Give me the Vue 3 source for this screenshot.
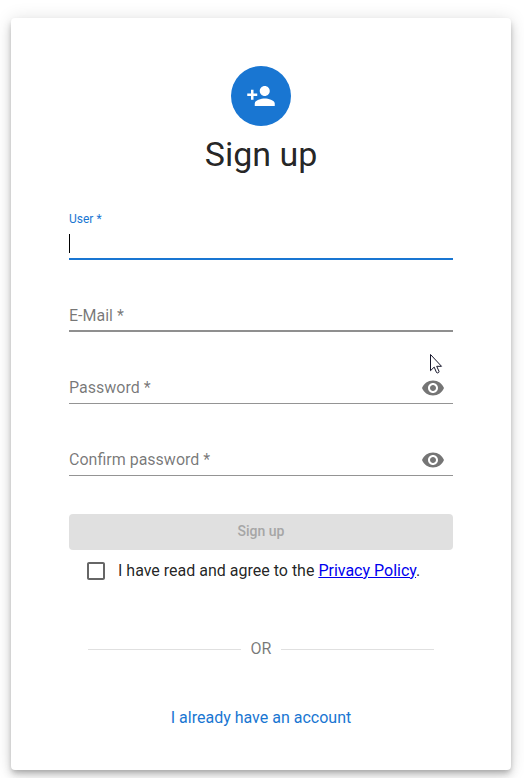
<script setup>
import { ref } from 'vue'

const fields = ref([
  { id: 'user', label: 'User', state: 'focused' },
  { id: 'email', label: 'E-Mail', state: 'hovered' },
  { id: 'password', label: 'Password', state: '', secret: true },
  { id: 'confirm', label: 'Confirm password', state: '', secret: true },
])
</script>

<template>
  <main class="page">
    <section class="card">
      <div class="avatar">
        <svg class="avatar-icon" viewBox="0 0 24 24">
          <path d="M15 12c2.21 0 4-1.79 4-4s-1.79-4-4-4-4 1.79-4 4 1.79 4 4 4zm-9-2V7H4v3H1v2h3v3h2v-3h3v-2H6zm9 4c-2.67 0-8 1.34-8 4v2h16v-2c0-2.66-5.33-4-8-4z" />
        </svg>
      </div>
      <h1 class="title">Sign up</h1>

      <form class="form" @submit.prevent>
        <div v-for="f in fields" :key="f.id" class="field" :class="f.state">
          <label class="label">{{ f.label }} *</label>
          <span v-if="f.state === 'focused'" class="caret"></span>
          <svg v-if="f.secret" class="eye" viewBox="0 0 24 24">
            <path d="M12 4.5C7 4.5 2.73 7.61 1 12c1.73 4.39 6 7.5 11 7.5s9.27-3.11 11-7.5c-1.73-4.39-6-7.5-11-7.5zM12 17c-2.76 0-5-2.24-5-5s2.24-5 5-5 5 2.24 5 5-2.24 5-5 5zm0-8c-1.66 0-3 1.34-3 3s1.34 3 3 3 3-1.34 3-3-1.34-3-3-3z" />
          </svg>
        </div>
        <button class="submit" disabled>Sign up</button>
      </form>

      <div class="agree">
        <svg class="checkbox" viewBox="0 0 24 24">
          <path d="M19 5v14H5V5h14m0-2H5c-1.1 0-2 .9-2 2v14c0 1.1.9 2 2 2h14c1.1 0 2-.9 2-2V5c0-1.1-.9-2-2-2z" />
        </svg>
        <span class="agree-text">I have read and agree to the <a class="policy" href="#">Privacy Policy</a>.</span>
      </div>

      <div class="divider"><span>OR</span></div>
      <a class="account">I already have an account</a>
    </section>

    <svg class="pointer" viewBox="0 0 13 20">
      <path d="M.5.5v16.2l3.7-3.6 2.3 5.4c.8 1 2.9.1 2.5-1.2l-2.3-5h4.8z" />
    </svg>
  </main>
</template>

<style>
body {
  margin: 0;
  background: #fff;
}
</style>

<style scoped>
.page {
  box-sizing: border-box;
  height: 778px;
  padding: 18px 13px 8px 11px;
  overflow: hidden;
  font-family: Roboto, sans-serif;
  font-size: 16px;
  color: rgba(0, 0, 0, 0.87);
}
.card {
  box-sizing: border-box;
  display: flex;
  flex-direction: column;
  align-items: center;
  width: 500px;
  height: 752px;
  padding: 48px 58px 0;
  border-radius: 4px;
  background: #fff;
  box-shadow: 0 3px 5px -1px rgba(0, 0, 0, 0.2), 0 6px 10px 0 rgba(0, 0, 0, 0.14), 0 1px 18px 0 rgba(0, 0, 0, 0.12);
}
.avatar {
  display: flex;
  align-items: center;
  justify-content: center;
  width: 60px;
  height: 60px;
  border-radius: 50%;
  background: #1976d2;
}
.avatar-icon {
  width: 30px;
  height: 30px;
  fill: #fff;
}
.title {
  margin: 7px 0 0;
  font-size: 34px;
  font-weight: 400;
  line-height: 42px;
}
.form {
  width: 384px;
  padding-top: 37px;
}
.field {
  position: relative;
  box-sizing: border-box;
  display: flex;
  align-items: center;
  justify-content: space-between;
  height: 32px;
  margin-bottom: 40px;
  padding-right: 8px;
  border-bottom: 1px solid #949494;
}
.form .field:first-child {
  height: 48px;
}
.label {
  line-height: 20px;
  color: rgba(0, 0, 0, 0.54);
}
.field.focused {
  flex-direction: column;
  align-items: flex-start;
  justify-content: flex-start;
  border-bottom: 2px solid #1976d2;
}
.focused .label {
  font-size: 12px;
  line-height: 14px;
  color: #1976d2;
}
.caret {
  width: 1px;
  height: 19px;
  margin-top: 8px;
  background: #000;
}
.field.hovered {
  padding-top: 2px;
  border-bottom: 2px solid #8f8f8f;
}
.eye {
  width: 24px;
  height: 24px;
  fill: #757575;
}
.submit {
  display: block;
  width: 100%;
  height: 36px;
  margin-top: -2px;
  padding: 0 16px 2px;
  border: 0;
  border-radius: 4px;
  background: #e0e0e0;
  color: #a6a6a6;
  font: 500 14px/24px Roboto, sans-serif;
}
.agree {
  display: flex;
  align-items: center;
  align-self: flex-start;
  gap: 10px;
  height: 42px;
  padding-left: 15px;
}
.agree-text {
  padding-bottom: 2px;
}
.checkbox {
  width: 24px;
  height: 24px;
  fill: #666;
}
.policy {
  color: #0000ee;
}
.divider {
  display: flex;
  align-items: center;
  gap: 10px;
  width: 346px;
  margin-top: 45px;
  line-height: 24px;
  color: rgba(0, 0, 0, 0.54);
}
.divider::before,
.divider::after {
  content: '';
  flex: 1;
  height: 1px;
  background: #e0e0e0;
}
.account {
  margin-top: 45px;
  line-height: 24px;
  color: #1976d2;
}
.pointer {
  position: absolute;
  left: 430px;
  top: 354px;
  width: 13px;
  height: 20px;
  fill: #fff;
  stroke: #15152a;
  stroke-width: 1;
}
</style>
